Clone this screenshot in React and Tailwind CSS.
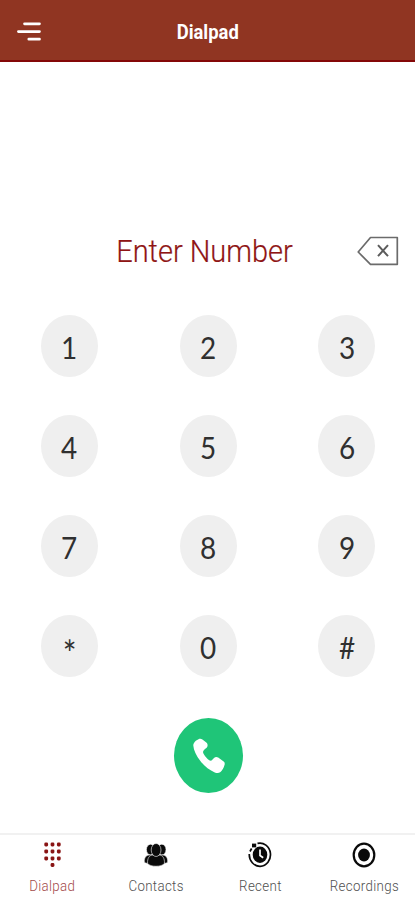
import React from 'react';

const keys = ['1', '2', '3', '4', '5', '6', '7', '8', '9', '*', '0', '#'];

function MenuIcon() {
  return (
    <svg width="25" height="20" viewBox="0 0 25 20" stroke="#fff" strokeWidth="2.7" strokeLinecap="round">
      <path d="M8.5 1.8H23.5M2.4 9.6H23.5M12.8 17.2H23.5" />
    </svg>
  );
}

function BackspaceIcon() {
  return (
    <svg width="42" height="30" viewBox="0 0 42 30" fill="none" stroke="#6b6b6b" strokeWidth="1.7" strokeLinejoin="round">
      <path d="M13.5 1.5H40.3V28.3H13.5L1.2 16Z" />
      <path d="M21 9.2L31 20.2M31 9.2L21 20.2" stroke="#5c5c5c" strokeWidth="2" />
    </svg>
  );
}

function PhoneIcon() {
  return (
    <svg width="32" height="36" viewBox="0 0 32 36" fill="#fff">
      <path d="M0.3 7.5C0.3 6 1 4.5 2.8 2.8L5.5 1.2C7 0.6 8.2 0.7 9.4 1.6L13 4.3C14.4 5.4 14.6 6.2 14.6 7.5C14.6 9.2 13.5 9.8 12 11L10.8 12.2C9.8 13.5 9.8 14.5 10.7 16C12.4 18.8 14 20.8 16.2 22.2C17.5 23 18.4 22.8 19.3 21.8L21 20C22.2 18.9 23.7 18.7 25.2 19.6L30.3 23.3C31.8 24.4 32 25.4 31.5 27C30.8 29.4 29.5 32.4 27.5 34C25.8 35.2 23.8 35.2 21.8 34.4C16.5 32.2 11 27.8 7.2 22.8C3.4 17.8 0.6 12.2 0.3 7.5Z" />
    </svg>
  );
}

function DialIcon() {
  const dots = [[5.2, 2.5], [11.5, 2.5], [17.8, 2.5], [5.2, 9.4], [11.5, 9.4], [17.8, 9.4], [5.2, 16.4], [11.5, 16.4], [17.8, 16.4], [11.5, 23]];
  return (
    <svg width="23" height="26" viewBox="0 0 23 26" fill="#891414">
      {dots.map(([x, y]) => <rect key={`${x}-${y}`} x={x - 1.9} y={y - 2} width="3.8" height="4" rx="1.4" />)}
    </svg>
  );
}

function GroupIcon() {
  return (
    <svg width="24" height="26" viewBox="0 0 24 26" fill="#0a0a0a" stroke="#fff" strokeWidth="0.6">
      <ellipse cx="6.6" cy="7.6" rx="4.2" ry="5.4" />
      <ellipse cx="17.8" cy="7.6" rx="4.2" ry="5.4" />
      <path d="M0.3 20.2C0 16 2 13 5 13H19C22 13 24 16 23.7 20.2C21.5 22 18 21.5 12 21.5S2.5 22 0.3 20.2Z" />
      <path d="M3.6 21.4C3.2 16.5 5.2 13 9 13H15C18.8 13 20.8 16.5 20.4 21.4C18 25.2 6 25.2 3.6 21.4Z" />
      <ellipse cx="12.1" cy="8" rx="4.9" ry="6.5" />
    </svg>
  );
}

function RecentIcon() {
  return (
    <svg width="24" height="26" viewBox="0 0 24 26" fill="none">
      <path d="M9.5 1.4A10.6 11.6 0 1 1 1.3 12" stroke="#0a0a0a" strokeWidth="1.7" />
      <path d="M2 9.5L3.6 6.5" stroke="#0a0a0a" strokeWidth="1.7" />
      <path d="M4 1.6H8.2V5.4H4Z" fill="#0a0a0a" />
      <ellipse cx="12" cy="12.7" rx="7.3" ry="8.2" fill="#0a0a0a" />
      <path d="M12 7.5V13.5L15.2 15.8" stroke="#fff" strokeWidth="1.7" />
    </svg>
  );
}

function RecordIcon() {
  return (
    <svg width="24" height="26" viewBox="0 0 24 26">
      <ellipse cx="12" cy="13" rx="10.3" ry="11.4" fill="none" stroke="#0a0a0a" strokeWidth="2.2" />
      <ellipse cx="12" cy="13" rx="5.9" ry="6.4" fill="#0a0a0a" />
    </svg>
  );
}

const tabs = [
  { label: 'Dialpad', icon: DialIcon, color: 'text-[#a34a4a]' },
  { label: 'Contacts', icon: GroupIcon, color: 'text-[#505050]' },
  { label: 'Recent', icon: RecentIcon, color: 'text-[#505050]' },
  { label: 'Recordings', icon: RecordIcon, color: 'text-[#505050]' },
];

export default function App() {
  return (
    <div className="flex h-[900px] w-[415px] flex-col overflow-hidden bg-white font-['Roboto',sans-serif]">
      {/* Header */}
      <header className="grid h-[62px] shrink-0 grid-cols-[1fr_auto_1fr] items-center border-b-2 border-[#840808] bg-[#903522]">
        <button className="ml-4 pt-[3px]"><MenuIcon /></button>
        <h1 className="scale-x-[0.92] pt-[4px] text-[20px] font-bold text-white">Dialpad</h1>
      </header>

      {/* Number input */}
      <div className="mt-[168px] grid h-[42px] shrink-0 grid-cols-[357px_42px] items-center">
        <div className="pt-[2px] pl-[51px] text-center">
          <span className="inline-block scale-x-[0.935] text-[31px] leading-[40px] font-light text-[#8f1515] [-webkit-text-stroke:0.2px_#8f1515]">Enter Number</span>
        </div>
        <button><BackspaceIcon /></button>
      </div>

      {/* Keys */}
      <div className="mt-[43px] grid shrink-0 grid-cols-[138.7px_138.7px_138.7px] gap-y-[38px]">
        {keys.map((key) => (
          <button
            key={key}
            className="flex h-[62px] w-[57px] items-center justify-center justify-self-center rounded-[50%] bg-[#efefef] font-['Lato',sans-serif] text-[31px] text-[#303030]"
          >
            <span className={key === '*' ? 'scale-x-90 pt-[13px] text-[36px] leading-none' : 'scale-x-90 pt-[3px] leading-none'}>{key}</span>
          </button>
        ))}
      </div>

      <button className="mt-[41px] ml-[174px] flex h-[75px] w-[69px] shrink-0 items-center justify-center rounded-[50%] bg-[#1fc578]">
        <PhoneIcon />
      </button>

      {/* Bottom tabs */}
      <nav className="mt-auto grid h-[67px] shrink-0 grid-cols-[104px_104px_104px_104px] border-t-2 border-[#f1f1f1]">
        {tabs.map(({ label, icon: Icon, color }) => (
          <button key={label} className="flex flex-col items-center pt-[7px]">
            <Icon />
            <span className={`mt-2 scale-x-95 text-[14px] leading-5 font-light tracking-wide ${color}`}>{label}</span>
          </button>
        ))}
      </nav>
    </div>
  );
}
